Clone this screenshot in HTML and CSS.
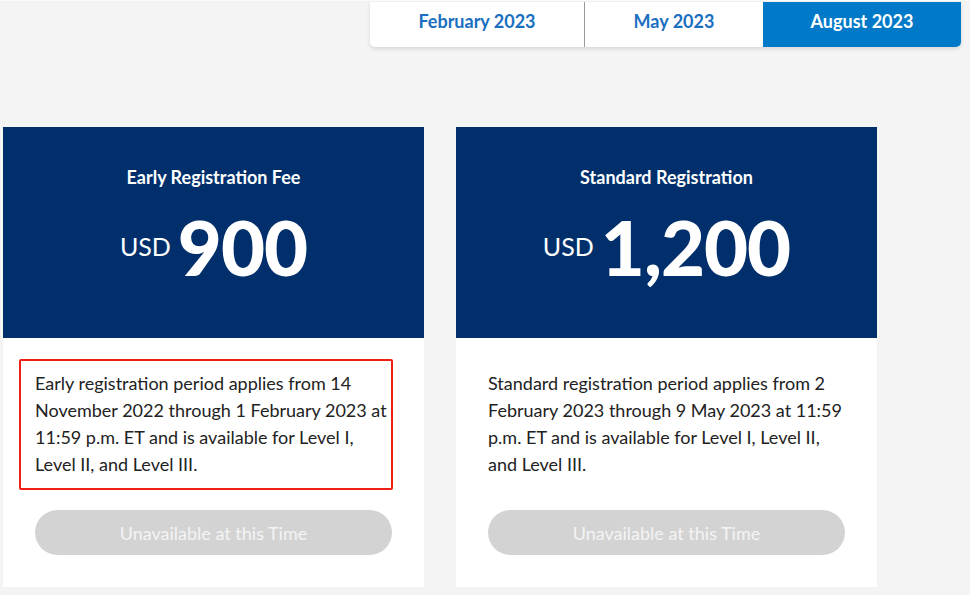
FILE: index.html
```html
<!DOCTYPE html>
<html>
<head>
<meta charset="utf-8">
<link rel="stylesheet" href="styles.css">
</head>
<body>
<div class="page">
  <div class="tabs">
    <div class="tab tab-feb">February 2023</div>
    <div class="tab tab-may">May 2023</div>
    <div class="tab tab-aug active">August 2023</div>
  </div>
  <div class="cards">
    <div class="card">
      <div class="card-head">
        <div class="card-title">Early Registration Fee</div>
        <div class="price"><span class="cur">USD</span><span class="amt">900</span></div>
      </div>
      <div class="card-body">
        <div class="desc">
          <p>Early registration period applies from 14 November 2022 through 1 February 2023 at 11:59 p.m. ET and is available for Level I, Level II, and Level III.</p>
          <div class="highlight"></div>
        </div>
        <div class="btn">Unavailable at this Time</div>
      </div>
    </div>
    <div class="card">
      <div class="card-head">
        <div class="card-title">Standard Registration</div>
        <div class="price"><span class="cur">USD</span><span class="amt">1,200</span></div>
      </div>
      <div class="card-body">
        <div class="desc">
          <p>Standard registration period applies from 2 February 2023 through 9 May 2023 at 11:59 p.m. ET and is available for Level I, Level II, and Level III.</p>
        </div>
        <div class="btn">Unavailable at this Time</div>
      </div>
    </div>
  </div>
</div>
</body>
</html>
```
FILE: styles.css
```css
* { box-sizing: border-box; }
html, body { margin: 0; padding: 0; }
body {
  background: #f4f4f4;
  font-family: Lato, "Open Sans", sans-serif;
  width: 970px;
  height: 595px;
  overflow: hidden;
  border-top: 1px solid #fafafa;
}
.page { padding-top: 1px; }
.tabs {
  display: flex;
  margin-left: 370px;
  width: 591px;
  height: 45px;
  background: #fff;
  border-radius: 0 0 5px 5px;
  box-shadow: 0 2px 4px rgba(0,0,0,0.12);
  overflow: hidden;
}
.tab {
  display: flex;
  align-items: center;
  justify-content: center;
  font-size: 18px;
  font-weight: 700;
  color: #1a6fc0;
  padding-bottom: 7px;
}
.tab-feb { width: 215px; border-right: 1px solid #9a9a9a; }
.tab-may { width: 178px; }
.tab-aug { width: 198px; }
.tab.active { background: #0079c8; color: #fff; }

.cards {
  display: flex;
  gap: 32px;
  margin-top: 80px;
  margin-left: 3px;
}
.card {
  width: 421px;
  background: #fff;
}
.card-head {
  background: #002f6c;
  color: #fff;
  height: 211px;
  text-align: center;
  padding-top: 39px;
}
.card-title {
  font-size: 18px;
  font-weight: 700;
  line-height: 22px;
}
.price {
  margin-top: 21px;
  display: flex;
  justify-content: center;
  align-items: baseline;
  line-height: 1;
}
.cur {
  font-size: 25px;
  font-weight: 400;
  margin-right: 7px;
  position: relative;
  top: -20px;
}
.amt {
  font-size: 76px;
  font-weight: 900;
  letter-spacing: -1px;
}
.card-body {
  padding: 32px 32px 32px 32px;
}
.desc {
  position: relative;
}
.desc p {
  margin: 0;
  font-size: 18px;
  line-height: 27px;
  color: #222;
}
.highlight {
  position: absolute;
  left: -16px;
  right: -1px;
  top: -11px;
  bottom: -12px;
  border: 2px solid #f01e14;
  border-radius: 2px;
}
.btn {
  margin-top: 32px;
  height: 45px;
  border-radius: 23px;
  background: #d3d3d3;
  color: #f4f4f4;
  font-size: 18px;
  display: flex;
  align-items: center;
  justify-content: center;
}
```
